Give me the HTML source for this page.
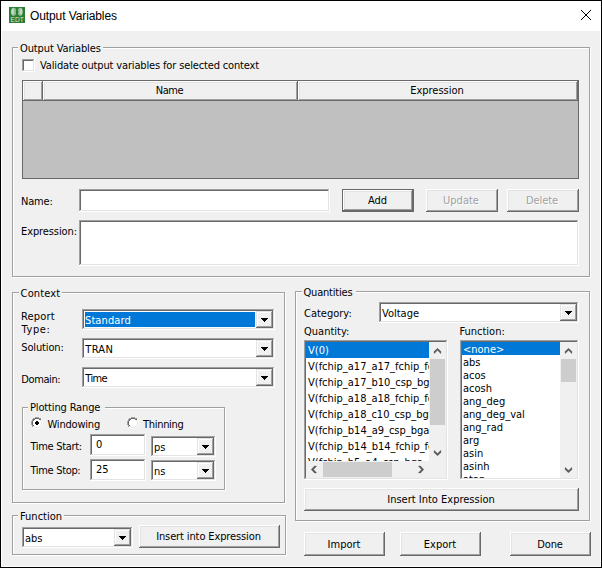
<!DOCTYPE html>
<html><head><meta charset="utf-8"><title>Output Variables</title>
<style>
html,body{margin:0;padding:0;}
body{width:602px;height:568px;overflow:hidden;background:#fff;position:relative;
 font-family:"DejaVu Sans Condensed","DejaVu Sans","Liberation Sans",sans-serif;font-stretch:condensed;font-size:11px;color:#000;line-height:13px;}
#win{position:absolute;left:0;top:0;width:600px;height:566px;border:1px solid #000;background:#fff;}
#body{position:absolute;left:2px;top:31px;width:598px;height:535px;background:#f0f0f0;}
.abs,.t,.grp,.grp i,.sunk,.btn,.cb,.arrow,.hl,.lbl{position:absolute;}
.t{white-space:nowrap;line-height:13px;height:13px;}
.title{position:absolute;left:29px;top:7px;font-family:"Liberation Sans",sans-serif;font-stretch:normal;font-size:12px;line-height:16px;letter-spacing:-0.1px;white-space:nowrap;}
/* group box: etched frame */
.grp{border:1px solid #a0a0a0;box-shadow:1px 1px 0 #fff, inset 1px 1px 0 #fff;}
.gl{position:absolute;background:#f0f0f0;white-space:nowrap;line-height:13px;height:13px;padding:0 2px;}
/* sunken edit */
.sunk{background:#fff;box-shadow:inset -1px -1px 0 #fff, inset 1px 1px 0 #a0a0a0, inset -2px -2px 0 #e3e3e3, inset 2px 2px 0 #696969;box-sizing:border-box;overflow:hidden;}
/* raised button */
.btn{background:#f0f0f0;box-shadow:inset -1px -1px 0 #696969, inset 1px 1px 0 #fff, inset -2px -2px 0 #a0a0a0, inset 2px 2px 0 #e3e3e3;box-sizing:border-box;text-align:center;white-space:nowrap;}
.btn.def{box-shadow:inset 0 0 0 1px #696969, inset -2px -2px 0 #696969, inset 2px 2px 0 #fff, inset -3px -3px 0 #a0a0a0, inset 3px 3px 0 #e3e3e3;}
.btn.dis{color:#a0a0a0;text-shadow:1px 1px 0 #fff;}
/* combo drop button */
.cb{width:17px;height:17px;background:#f0f0f0;box-shadow:inset -1px -1px 0 #696969, inset 1px 1px 0 #e3e3e3, inset -2px -2px 0 #a0a0a0, inset 2px 2px 0 #fff;box-sizing:border-box;}
.cb:after{content:"";position:absolute;left:5px;top:7px;width:7px;height:4px;background:linear-gradient(#000,#000) 0 0/7px 1px no-repeat,linear-gradient(#000,#000) 1px 1px/5px 1px no-repeat,linear-gradient(#000,#000) 2px 2px/3px 1px no-repeat,linear-gradient(#000,#000) 3px 3px/1px 1px no-repeat;}
.hl{background:#0078d7;color:#fff;}
.sb{position:absolute;background:#f0f0f0;}
.thumb{position:absolute;background:#cdcdcd;}
.row{position:absolute;left:0;white-space:nowrap;}
</style></head><body>
<div id="win">
 <!-- app icon -->
 <svg style="position:absolute;left:8px;top:6px" width="16" height="16" viewBox="0 0 16 16">
  <rect width="16" height="16" fill="#2a7e31"/>
  <ellipse cx="4.6" cy="4.8" rx="2.7" ry="4" fill="#fff" fill-opacity="0.58"/>
  <ellipse cx="11.2" cy="4.8" rx="2.5" ry="4" fill="#fff" fill-opacity="0.58"/>
  <ellipse cx="3.7" cy="4.4" rx="1.2" ry="2.8" fill="#fff" fill-opacity="0.3"/>
  <ellipse cx="12.1" cy="4.4" rx="1.2" ry="2.8" fill="#fff" fill-opacity="0.3"/>
  <path d="M5.6 1.6 L6.4 4.8 L5.6 8 M10.2 1.6 L9.4 4.8 L10.2 8" stroke="#2a7e31" stroke-opacity="0.45" stroke-width="0.8" fill="none"/>
  <circle cx="7.9" cy="5" r="1" fill="#1f6a27"/>
  <text x="8.1" y="14.7" font-family="Liberation Sans, sans-serif" font-size="7.4" fill="#fff" fill-opacity="0.82" text-anchor="middle" textLength="13.2" lengthAdjust="spacingAndGlyphs">EDT</text>
 </svg>
 <div class="title">Output Variables</div>
 <!-- close X -->
 <svg style="position:absolute;left:579px;top:8px" width="12" height="12" viewBox="0 0 12 12" shape-rendering="crispEdges"><path d="M1.5 1.5 L10.5 10.5 M10.5 1.5 L1.5 10.5" stroke="#000" stroke-width="1" stroke-linecap="square" fill="none"/></svg>
</div>
<div id="body"></div>

<!-- ===== Output Variables group ===== -->
<div class="grp" style="left:12px;top:47px;width:576px;height:228px;"></div>
<div class="gl" style="left:18px;top:42px;letter-spacing:-0.12px;">Output Variables</div>

<div class="sunk" style="left:22px;top:59px;width:13px;height:13px;"></div>
<div class="t" style="left:40px;top:59px;letter-spacing:-0.15px;">Validate output variables for selected context</div>

<!-- table -->
<div class="abs" style="left:22px;top:80px;width:557px;height:99px;background:#c0c0c0;border:1px solid #696969;box-sizing:border-box;"></div>
<div class="btn" style="left:23px;top:81px;width:20px;height:20px;"></div>
<div class="btn" style="left:43px;top:81px;width:255px;height:20px;line-height:19px;letter-spacing:-0.4px;padding-right:2px;">Name</div>
<div class="btn" style="left:298px;top:81px;width:280px;height:20px;line-height:19px;padding-right:2px;">Expression</div>

<div class="t" style="left:21px;top:195px;letter-spacing:-0.2px;">Name:</div>
<div class="sunk" style="left:79px;top:189px;width:251px;height:23px;"></div>
<div class="btn def" style="left:342px;top:189px;width:72px;height:23px;line-height:24px;padding-right:1px;">Add</div>
<div class="btn dis" style="left:426px;top:189px;width:72px;height:23px;line-height:24px;padding-right:2px;">Update</div>
<div class="btn dis" style="left:507px;top:189px;width:72px;height:23px;line-height:24px;padding-right:2px;letter-spacing:-0.1px;">Delete</div>

<div class="t" style="left:21px;top:225px;letter-spacing:-0.1px;">Expression:</div>
<div class="sunk" style="left:79px;top:220px;width:500px;height:46px;"></div>

<!-- ===== Context group ===== -->
<div class="grp" style="left:12px;top:292px;width:271px;height:209px;"></div>
<div class="gl" style="left:18.6px;top:287px;letter-spacing:0.15px;">Context</div>

<div class="t" style="left:21px;top:310px;letter-spacing:0.2px;">Report</div>
<div class="t" style="left:21.5px;top:323px;letter-spacing:0.6px;">Type:</div>
<div class="sunk" style="left:82px;top:309px;width:193px;height:21px;">
  <div class="hl" style="left:3px;top:3px;width:170px;height:15px;"></div>
  <div class="t" style="left:3px;top:5px;color:#fff;letter-spacing:0.1px;">Standard</div>
  <div class="cb" style="left:174px;top:2px;"></div>
</div>
<div class="t" style="left:21.3px;top:341px;letter-spacing:-0.15px;">Solution:</div>
<div class="sunk" style="left:82px;top:338px;width:193px;height:21px;">
  <div class="t" style="left:3.3px;top:5px;letter-spacing:0.3px;">TRAN</div>
  <div class="cb" style="left:174px;top:2px;"></div>
</div>
<div class="t" style="left:21.3px;top:373px;letter-spacing:-0.4px;">Domain:</div>
<div class="sunk" style="left:82px;top:367px;width:193px;height:21px;">
  <div class="t" style="left:3.3px;top:5px;letter-spacing:-0.6px;">Time</div>
  <div class="cb" style="left:174px;top:2px;"></div>
</div>

<!-- Plotting Range -->
<div class="grp" style="left:22px;top:407px;width:201px;height:81px;"></div>
<div class="gl" style="left:28px;top:401px;letter-spacing:-0.15px;padding-right:5px;">Plotting Range</div>
<svg class="abs" style="left:31px;top:417px" width="12" height="12" viewBox="0 0 12 12" shape-rendering="crispEdges"><rect x="4" y="0" width="4" height="1" fill="#a0a0a0"/><rect x="2" y="1" width="2" height="1" fill="#a0a0a0"/><rect x="4" y="1" width="4" height="1" fill="#696969"/><rect x="8" y="1" width="2" height="1" fill="#a0a0a0"/><rect x="1" y="2" width="1" height="1" fill="#a0a0a0"/><rect x="2" y="2" width="2" height="1" fill="#696969"/><rect x="4" y="2" width="4" height="1" fill="#ffffff"/><rect x="8" y="2" width="2" height="1" fill="#696969"/><rect x="10" y="2" width="1" height="1" fill="#ffffff"/><rect x="1" y="3" width="1" height="1" fill="#a0a0a0"/><rect x="2" y="3" width="1" height="1" fill="#696969"/><rect x="3" y="3" width="6" height="1" fill="#ffffff"/><rect x="9" y="3" width="1" height="1" fill="#e3e3e3"/><rect x="10" y="3" width="1" height="1" fill="#ffffff"/><rect x="0" y="4" width="1" height="1" fill="#a0a0a0"/><rect x="1" y="4" width="1" height="1" fill="#696969"/><rect x="2" y="4" width="3" height="1" fill="#ffffff"/><rect x="5" y="4" width="2" height="1" fill="#000000"/><rect x="7" y="4" width="3" height="1" fill="#ffffff"/><rect x="10" y="4" width="1" height="1" fill="#e3e3e3"/><rect x="11" y="4" width="1" height="1" fill="#ffffff"/><rect x="0" y="5" width="1" height="1" fill="#a0a0a0"/><rect x="1" y="5" width="1" height="1" fill="#696969"/><rect x="2" y="5" width="2" height="1" fill="#ffffff"/><rect x="4" y="5" width="4" height="1" fill="#000000"/><rect x="8" y="5" width="2" height="1" fill="#ffffff"/><rect x="10" y="5" width="1" height="1" fill="#e3e3e3"/><rect x="11" y="5" width="1" height="1" fill="#ffffff"/><rect x="0" y="6" width="1" height="1" fill="#a0a0a0"/><rect x="1" y="6" width="1" height="1" fill="#696969"/><rect x="2" y="6" width="2" height="1" fill="#ffffff"/><rect x="4" y="6" width="4" height="1" fill="#000000"/><rect x="8" y="6" width="2" height="1" fill="#ffffff"/><rect x="10" y="6" width="1" height="1" fill="#e3e3e3"/><rect x="11" y="6" width="1" height="1" fill="#ffffff"/><rect x="0" y="7" width="1" height="1" fill="#a0a0a0"/><rect x="1" y="7" width="1" height="1" fill="#696969"/><rect x="2" y="7" width="3" height="1" fill="#ffffff"/><rect x="5" y="7" width="2" height="1" fill="#000000"/><rect x="7" y="7" width="3" height="1" fill="#ffffff"/><rect x="10" y="7" width="1" height="1" fill="#e3e3e3"/><rect x="11" y="7" width="1" height="1" fill="#ffffff"/><rect x="1" y="8" width="1" height="1" fill="#a0a0a0"/><rect x="2" y="8" width="1" height="1" fill="#696969"/><rect x="3" y="8" width="6" height="1" fill="#ffffff"/><rect x="9" y="8" width="1" height="1" fill="#e3e3e3"/><rect x="10" y="8" width="1" height="1" fill="#ffffff"/><rect x="1" y="9" width="1" height="1" fill="#a0a0a0"/><rect x="2" y="9" width="2" height="1" fill="#e3e3e3"/><rect x="4" y="9" width="4" height="1" fill="#ffffff"/><rect x="8" y="9" width="2" height="1" fill="#e3e3e3"/><rect x="10" y="9" width="1" height="1" fill="#ffffff"/><rect x="2" y="10" width="2" height="1" fill="#ffffff"/><rect x="4" y="10" width="4" height="1" fill="#e3e3e3"/><rect x="8" y="10" width="2" height="1" fill="#ffffff"/><rect x="4" y="11" width="4" height="1" fill="#ffffff"/></svg>
<div class="t" style="left:47.5px;top:418px;letter-spacing:-0.2px;">Windowing</div>
<svg class="abs" style="left:127px;top:417px" width="12" height="12" viewBox="0 0 12 12" shape-rendering="crispEdges"><rect x="4" y="0" width="4" height="1" fill="#a0a0a0"/><rect x="2" y="1" width="2" height="1" fill="#a0a0a0"/><rect x="4" y="1" width="4" height="1" fill="#696969"/><rect x="8" y="1" width="2" height="1" fill="#a0a0a0"/><rect x="1" y="2" width="1" height="1" fill="#a0a0a0"/><rect x="2" y="2" width="2" height="1" fill="#696969"/><rect x="4" y="2" width="4" height="1" fill="#ffffff"/><rect x="8" y="2" width="2" height="1" fill="#696969"/><rect x="10" y="2" width="1" height="1" fill="#ffffff"/><rect x="1" y="3" width="1" height="1" fill="#a0a0a0"/><rect x="2" y="3" width="1" height="1" fill="#696969"/><rect x="3" y="3" width="6" height="1" fill="#ffffff"/><rect x="9" y="3" width="1" height="1" fill="#e3e3e3"/><rect x="10" y="3" width="1" height="1" fill="#ffffff"/><rect x="0" y="4" width="1" height="1" fill="#a0a0a0"/><rect x="1" y="4" width="1" height="1" fill="#696969"/><rect x="2" y="4" width="8" height="1" fill="#ffffff"/><rect x="10" y="4" width="1" height="1" fill="#e3e3e3"/><rect x="11" y="4" width="1" height="1" fill="#ffffff"/><rect x="0" y="5" width="1" height="1" fill="#a0a0a0"/><rect x="1" y="5" width="1" height="1" fill="#696969"/><rect x="2" y="5" width="8" height="1" fill="#ffffff"/><rect x="10" y="5" width="1" height="1" fill="#e3e3e3"/><rect x="11" y="5" width="1" height="1" fill="#ffffff"/><rect x="0" y="6" width="1" height="1" fill="#a0a0a0"/><rect x="1" y="6" width="1" height="1" fill="#696969"/><rect x="2" y="6" width="8" height="1" fill="#ffffff"/><rect x="10" y="6" width="1" height="1" fill="#e3e3e3"/><rect x="11" y="6" width="1" height="1" fill="#ffffff"/><rect x="0" y="7" width="1" height="1" fill="#a0a0a0"/><rect x="1" y="7" width="1" height="1" fill="#696969"/><rect x="2" y="7" width="8" height="1" fill="#ffffff"/><rect x="10" y="7" width="1" height="1" fill="#e3e3e3"/><rect x="11" y="7" width="1" height="1" fill="#ffffff"/><rect x="1" y="8" width="1" height="1" fill="#a0a0a0"/><rect x="2" y="8" width="1" height="1" fill="#696969"/><rect x="3" y="8" width="6" height="1" fill="#ffffff"/><rect x="9" y="8" width="1" height="1" fill="#e3e3e3"/><rect x="10" y="8" width="1" height="1" fill="#ffffff"/><rect x="1" y="9" width="1" height="1" fill="#a0a0a0"/><rect x="2" y="9" width="2" height="1" fill="#e3e3e3"/><rect x="4" y="9" width="4" height="1" fill="#ffffff"/><rect x="8" y="9" width="2" height="1" fill="#e3e3e3"/><rect x="10" y="9" width="1" height="1" fill="#ffffff"/><rect x="2" y="10" width="2" height="1" fill="#ffffff"/><rect x="4" y="10" width="4" height="1" fill="#e3e3e3"/><rect x="8" y="10" width="2" height="1" fill="#ffffff"/><rect x="4" y="11" width="4" height="1" fill="#ffffff"/></svg>
<div class="t" style="left:143px;top:418px;letter-spacing:-0.3px;">Thinning</div>

<div class="t" style="left:30.5px;top:440px;letter-spacing:-0.33px;">Time Start:</div>
<div class="sunk" style="left:90px;top:434px;width:56px;height:22px;"><div class="t" style="left:6px;top:4px;">0</div></div>
<div class="sunk" style="left:151px;top:436px;width:65px;height:21px;">
  <div class="t" style="left:3px;top:5px;">ps</div>
  <div class="cb" style="left:46px;top:2px;"></div>
</div>
<div class="t" style="left:30.5px;top:464px;letter-spacing:-0.33px;">Time Stop:</div>
<div class="sunk" style="left:90px;top:459px;width:56px;height:22px;"><div class="t" style="left:6px;top:4px;">25</div></div>
<div class="sunk" style="left:151px;top:460px;width:65px;height:21px;">
  <div class="t" style="left:3px;top:5px;">ns</div>
  <div class="cb" style="left:46px;top:2px;"></div>
</div>

<!-- ===== Function group ===== -->
<div class="grp" style="left:12px;top:515px;width:272px;height:38px;"></div>
<div class="gl" style="left:18px;top:510px;">Function</div>
<div class="sunk" style="left:22px;top:527px;width:111px;height:21px;">
  <div class="t" style="left:3px;top:5px;">abs</div>
  <div class="cb" style="left:92px;top:2px;"></div>
</div>
<div class="btn" style="left:139px;top:525px;width:141px;height:23px;line-height:24px;letter-spacing:-0.12px;padding-right:2px;">Insert into Expression</div>

<!-- ===== Quantities group ===== -->
<div class="grp" style="left:295px;top:291px;width:293px;height:228px;"></div>
<div class="gl" style="left:301.5px;top:286px;letter-spacing:-0.2px;padding-right:4px;">Quantities</div>
<div class="t" style="left:304px;top:307px;">Category:</div>
<div class="sunk" style="left:379px;top:302px;width:200px;height:21px;">
  <div class="t" style="left:3px;top:5px;">Voltage</div>
  <div class="cb" style="left:181px;top:2px;"></div>
</div>
<div class="t" style="left:304px;top:325px;">Quantity:</div>
<div class="t" style="left:459.4px;top:325px;">Function:</div>

<!-- quantity list -->
<div class="sunk" style="left:304px;top:340px;width:144px;height:140px;">
 <div class="abs" style="left:2px;top:2px;width:123px;height:119px;overflow:hidden;">
  <div class="row hl" style="top:0;width:123px;height:16px;line-height:18px;"><span style="padding-left:2px">V(0)</span></div>
  <div class="row" style="top:16px;height:16px;line-height:18px;padding-left:2px;">V(fchip_a17_a17_fchip_fchip</div>
  <div class="row" style="top:32px;height:16px;line-height:18px;padding-left:2px;">V(fchip_a17_b10_csp_bga</div>
  <div class="row" style="top:48px;height:16px;line-height:18px;padding-left:2px;">V(fchip_a18_a18_fchip_fchip</div>
  <div class="row" style="top:64px;height:16px;line-height:18px;padding-left:2px;">V(fchip_a18_c10_csp_bga</div>
  <div class="row" style="top:80px;height:16px;line-height:18px;padding-left:2px;">V(fchip_b14_a9_csp_bga</div>
  <div class="row" style="top:96px;height:16px;line-height:18px;padding-left:2px;">V(fchip_b14_b14_fchip_fchip</div>
  <div class="row" style="top:112px;height:16px;line-height:18px;padding-left:2px;">V(fchip_b5_a4_csp_bga</div>
 </div>
 <!-- vertical scrollbar -->
 <div class="sb" style="left:125px;top:2px;width:17px;height:119px;">
   <svg class="abs" style="left:0;top:0" width="17" height="17"><path d="M8.5 5.9 L12.2 9.4 L12 11.9 L8.5 8.6 L5 11.9 L4.8 9.4 Z" fill="#5e5e5e"/></svg>
   <div class="thumb" style="left:1px;top:17px;width:15px;height:66px;"></div>
   <svg class="abs" style="left:0;top:102px" width="17" height="17"><path d="M8.5 11.9 L12.2 8.4 L12 5.9 L8.5 9.2 L5 5.9 L4.8 8.4 Z" fill="#5e5e5e"/></svg>
 </div>
 <!-- horizontal scrollbar -->
 <div class="sb" style="left:2px;top:121px;width:123px;height:17px;">
   <svg class="abs" style="left:0;top:0" width="17" height="17"><path d="M5 8.5 L8.5 12.2 L11 12 L7.7 8.5 L11 5 L8.5 4.8 Z" fill="#5e5e5e"/></svg>
   <div class="thumb" style="left:17px;top:1px;width:69px;height:15px;"></div>
   <svg class="abs" style="left:106px;top:0" width="17" height="17"><path d="M12 8.5 L8.5 12.2 L6 12 L9.3 8.5 L6 5 L8.5 4.8 Z" fill="#5e5e5e"/></svg>
 </div>
 <div class="sb" style="left:125px;top:121px;width:17px;height:17px;"></div>
</div>

<!-- function list -->
<div class="sunk" style="left:460px;top:340px;width:119px;height:140px;">
 <div class="abs" style="left:2px;top:2px;width:98px;height:136px;overflow:hidden;">
  <div class="row hl" style="top:0;width:98px;height:13px;line-height:15px;"><span style="padding-left:1px">&lt;none&gt;</span></div>
  <div class="row" style="top:14px;padding-left:1px;">abs</div>
  <div class="row" style="top:27px;padding-left:1px;">acos</div>
  <div class="row" style="top:40px;padding-left:1px;">acosh</div>
  <div class="row" style="top:53px;padding-left:1px;">ang_deg</div>
  <div class="row" style="top:66px;padding-left:1px;">ang_deg_val</div>
  <div class="row" style="top:79px;padding-left:1px;">ang_rad</div>
  <div class="row" style="top:92px;padding-left:1px;">arg</div>
  <div class="row" style="top:105px;padding-left:1px;">asin</div>
  <div class="row" style="top:118px;padding-left:1px;">asinh</div>
  <div class="row" style="top:131px;padding-left:1px;">atan</div>
 </div>
 <div class="sb" style="left:100px;top:2px;width:17px;height:136px;">
   <svg class="abs" style="left:0;top:0" width="17" height="17"><path d="M8.5 5.9 L12.2 9.4 L12 11.9 L8.5 8.6 L5 11.9 L4.8 9.4 Z" fill="#5e5e5e"/></svg>
   <div class="thumb" style="left:1px;top:17px;width:15px;height:23px;"></div>
   <svg class="abs" style="left:0;top:119px" width="17" height="17"><path d="M8.5 11.9 L12.2 8.4 L12 5.9 L8.5 9.2 L5 5.9 L4.8 8.4 Z" fill="#5e5e5e"/></svg>
 </div>
</div>

<div class="btn" style="left:304px;top:488px;width:275px;height:23px;line-height:24px;padding-right:1px;">Insert Into Expression</div>

<div class="btn" style="left:304px;top:532px;width:81px;height:24px;line-height:25px;padding-right:1px;">Import</div>
<div class="btn" style="left:400px;top:532px;width:81px;height:24px;line-height:25px;padding-right:1px;">Export</div>
<div class="btn" style="left:510px;top:532px;width:81px;height:24px;line-height:25px;padding-right:1px;letter-spacing:-0.1px;">Done</div>
</body></html>
